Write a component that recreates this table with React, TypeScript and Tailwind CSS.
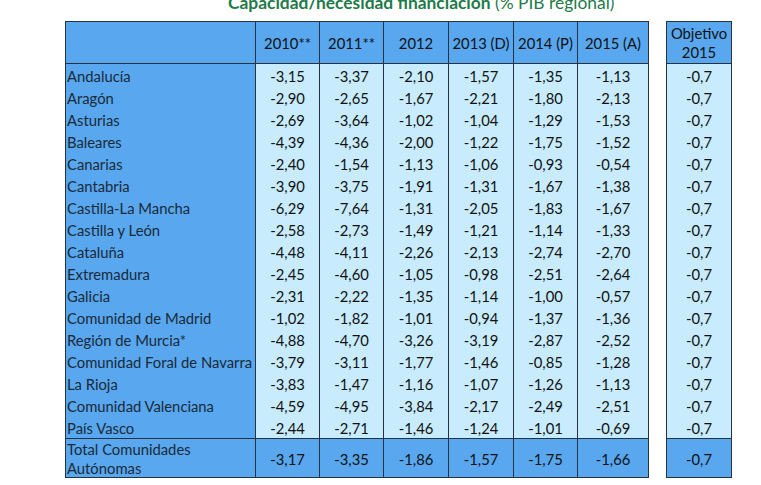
import React from "react";

const rows: string[][] = [
  ["Andalucía", "-3,15", "-3,37", "-2,10", "-1,57", "-1,35", "-1,13"],
  ["Aragón", "-2,90", "-2,65", "-1,67", "-2,21", "-1,80", "-2,13"],
  ["Asturias", "-2,69", "-3,64", "-1,02", "-1,04", "-1,29", "-1,53"],
  ["Baleares", "-4,39", "-4,36", "-2,00", "-1,22", "-1,75", "-1,52"],
  ["Canarias", "-2,40", "-1,54", "-1,13", "-1,06", "-0,93", "-0,54"],
  ["Cantabria", "-3,90", "-3,75", "-1,91", "-1,31", "-1,67", "-1,38"],
  ["Castilla-La Mancha", "-6,29", "-7,64", "-1,31", "-2,05", "-1,83", "-1,67"],
  ["Castilla y León", "-2,58", "-2,73", "-1,49", "-1,21", "-1,14", "-1,33"],
  ["Cataluña", "-4,48", "-4,11", "-2,26", "-2,13", "-2,74", "-2,70"],
  ["Extremadura", "-2,45", "-4,60", "-1,05", "-0,98", "-2,51", "-2,64"],
  ["Galicia", "-2,31", "-2,22", "-1,35", "-1,14", "-1,00", "-0,57"],
  ["Comunidad de Madrid", "-1,02", "-1,82", "-1,01", "-0,94", "-1,37", "-1,36"],
  ["Región de Murcia*", "-4,88", "-4,70", "-3,26", "-3,19", "-2,87", "-2,52"],
  ["Comunidad Foral de Navarra", "-3,79", "-3,11", "-1,77", "-1,46", "-0,85", "-1,28"],
  ["La Rioja", "-3,83", "-1,47", "-1,16", "-1,07", "-1,26", "-1,13"],
  ["Comunidad Valenciana", "-4,59", "-4,95", "-3,84", "-2,17", "-2,49", "-2,51"],
  ["País Vasco", "-2,44", "-2,71", "-1,46", "-1,24", "-1,01", "-0,69"],
];

const years = ["2010**", "2011**", "2012", "2013 (D)", "2014 (P)", "2015 (A)"];
// widths incl. left border line
const colW = ["w-[64px]", "w-[64px]", "w-[65px]", "w-[65px]", "w-[64px]", "w-[71px]"];
const total = ["-3,17", "-3,35", "-1,86", "-1,57", "-1,75", "-1,66"];

export default function App() {
  return (
    <div
      className="w-[761px] h-[485px] overflow-hidden bg-white text-[#111]"
      style={{ fontFamily: "Lato, 'Open Sans', sans-serif" }}
    >
      <div className="pl-[228px] -mt-[7px] h-[28px] whitespace-nowrap text-[17.4px] leading-[20px] text-[#1f7a4a]">
        <span className="font-bold">Capacidad/necesidad financiación</span> (% PIB regional)
      </div>

      <div className="flex pl-[65px] text-[14.8px]">
        {/* main table */}
        <div className="border border-[#26323d]">
          <div className="flex h-[42px] border-b border-[#26323d] bg-[#58a7ef]">
            <div className="w-[189px]" />
            {years.map((y, i) => (
              <div
                key={y}
                className={`${colW[i]} border-l border-[#26323d] flex items-center justify-center pt-[2px]`}
              >
                {y}
              </div>
            ))}
          </div>
          {rows.map((r) => (
            <div key={r[0]} className="flex h-[22px]">
              <div className="w-[189px] bg-[#58a7ef] pl-[1px] pt-[2px] leading-[20px] text-[#1b2a38] whitespace-nowrap">
                {r[0]}
              </div>
              {r.slice(1).map((v, i) => (
                <div
                  key={i}
                  className={`${colW[i]} border-l border-[#26323d] bg-[#c8ecfd] text-center pt-[2px] leading-[20px]`}
                >
                  {v}
                </div>
              ))}
            </div>
          ))}
          <div className="flex h-[39px] border-t border-[#26323d] bg-[#58a7ef]">
            <div className="w-[189px] pl-[1px] pt-[1px] leading-[19px] text-[#1b2a38]">
              Total Comunidades
              <br />
              Autónomas
            </div>
            {total.map((v, i) => (
              <div
                key={i}
                className={`${colW[i]} border-l border-[#26323d] flex items-center justify-center pt-[2px]`}
              >
                {v}
              </div>
            ))}
          </div>
        </div>

        {/* objective table */}
        <div className="ml-[17px] w-[66px] border border-[#26323d]">
          <div className="h-[42px] border-b border-[#26323d] bg-[#58a7ef] flex flex-col items-center justify-center leading-[19px]">
            <span>Objetivo</span>
            <span>2015</span>
          </div>
          {rows.map((r) => (
            <div key={r[0]} className="h-[22px] bg-[#c8ecfd] text-center pt-[2px] leading-[20px]">
              -0,7
            </div>
          ))}
          <div className="h-[39px] border-t border-[#26323d] bg-[#58a7ef] flex items-center justify-center pt-[2px]">
            -0,7
          </div>
        </div>
      </div>
    </div>
  );
}
